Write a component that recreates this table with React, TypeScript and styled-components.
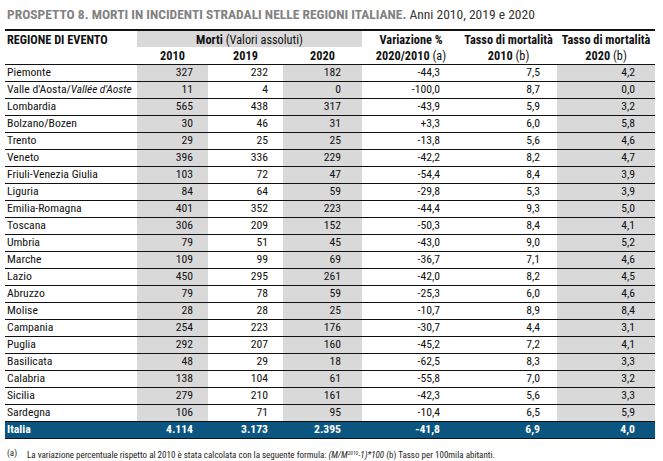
import React from "react";
import styled, { createGlobalStyle } from "styled-components";

const GlobalStyle = createGlobalStyle`
  html, body { margin: 0; padding: 0; background: #fff; }
  body {
    font-family: Roboto, "Liberation Sans", Arial, sans-serif;
    font-stretch: 77%;
    color: #111;
  }
`;

const Page = styled.div`
  width: 650px;
  padding: 0 8px 0 5px;
`;

const Title = styled.div`
  height: 29px;
  box-sizing: border-box;
  padding: 7px 0 0 2px;
  font-size: 13.5px;
  line-height: 14px;
  white-space: nowrap;
`;

const TitleStrong = styled.span`
  font-weight: bold;
  color: #828282;
`;

const TitleRest = styled.span`
  color: #333;
`;

const Table = styled.table`
  width: 650px;
  border-collapse: collapse;
  table-layout: fixed;
  font-size: 11.7px;
  border-top: 2px solid #111;
`;

const HeadRow = styled.tr<{ $h: number; $line?: boolean }>`
  height: ${(p) => p.$h}px;
  border-bottom: ${(p) => (p.$line ? "1px solid #111" : "none")};
`;

const HeadCell = styled.th<{ $grey?: boolean; $align?: string }>`
  padding: 2px 2px 0;
  font-size: 12.3px;
  font-weight: bold;
  text-align: ${(p) => p.$align || "center"};
  vertical-align: middle;
  background: ${(p) => (p.$grey ? "#d9d9d9" : "transparent")};
  line-height: 13px;
  white-space: nowrap;
`;

const Light = styled.span`
  font-weight: normal;
`;

const Row = styled.tr`
  height: 17px;
  border-bottom: 1px solid #111;
`;

const TotalRow = styled.tr`
  height: 17px;
  background: #0b5680;
  color: #fff;
  font-weight: bold;
  border-bottom: 1px solid #111;
`;

const NameCell = styled.td`
  padding: 0 0 0 2px;
  text-align: left;
  white-space: nowrap;
  line-height: 13px;
`;

const NameItalic = styled.i`
  font-size: 11.3px;
`;

const NumCell = styled.td<{ $grey?: boolean; $pad: number }>`
  padding: 0 ${(p) => p.$pad}px 0 0;
  text-align: right;
  line-height: 13px;
  background: ${(p) => (p.$grey ? "#d9d9d9" : "transparent")};
`;

const TotalCell = styled.td<{ $pad?: number }>`
  padding: 0 ${(p) => p.$pad ?? 0}px 0 ${(p) => (p.$pad === undefined ? 2 : 0)}px;
  text-align: ${(p) => (p.$pad === undefined ? "left" : "right")};
  line-height: 13px;
`;

const Note = styled.div`
  margin-top: 8px;
  padding-left: 2px;
  font-size: 9px;
  line-height: 12px;
  color: #222;
  white-space: nowrap;
  display: flex;
`;

const NoteTag = styled.span`
  width: 20px;
`;

const Formula = styled.i``;

const Sup = styled.sup`
  font-size: 5.5px;
  vertical-align: 3px;
`;

type R = [string, string, string, string, string, string, string];

const rows: R[] = [
  ["Piemonte", "327", "232", "182", "-44,3", "7,5", "4,2"],
  ["Valle d'Aosta/", "11", "4", "0", "-100,0", "8,7", "0,0"],
  ["Lombardia", "565", "438", "317", "-43,9", "5,9", "3,2"],
  ["Bolzano/Bozen", "30", "46", "31", "+3,3", "6,0", "5,8"],
  ["Trento", "29", "25", "25", "-13,8", "5,6", "4,6"],
  ["Veneto", "396", "336", "229", "-42,2", "8,2", "4,7"],
  ["Friuli-Venezia Giulia", "103", "72", "47", "-54,4", "8,4", "3,9"],
  ["Liguria", "84", "64", "59", "-29,8", "5,3", "3,9"],
  ["Emilia-Romagna", "401", "352", "223", "-44,4", "9,3", "5,0"],
  ["Toscana", "306", "209", "152", "-50,3", "8,4", "4,1"],
  ["Umbria", "79", "51", "45", "-43,0", "9,0", "5,2"],
  ["Marche", "109", "99", "69", "-36,7", "7,1", "4,6"],
  ["Lazio", "450", "295", "261", "-42,0", "8,2", "4,5"],
  ["Abruzzo", "79", "78", "59", "-25,3", "6,0", "4,6"],
  ["Molise", "28", "28", "25", "-10,7", "8,9", "8,4"],
  ["Campania", "254", "223", "176", "-30,7", "4,4", "3,1"],
  ["Puglia", "292", "207", "160", "-45,2", "7,2", "4,1"],
  ["Basilicata", "48", "29", "18", "-62,5", "8,3", "3,3"],
  ["Calabria", "138", "104", "61", "-55,8", "7,0", "3,2"],
  ["Sicilia", "279", "210", "161", "-42,3", "5,6", "3,3"],
  ["Sardegna", "106", "71", "95", "-10,4", "6,5", "5,9"],
];

const pads = [15, 15, 21, 20, 17, 20];
const greys = [true, false, true, false, false, true];

export default function App() {
  return (
    <>
      <GlobalStyle />
      <Page>
        <Title>
          <TitleStrong>PROSPETTO 8. MORTI IN INCIDENTI STRADALI NELLE REGIONI ITALIANE.</TitleStrong>{" "}
          <TitleRest>Anni 2010, 2019 e 2020</TitleRest>
        </Title>
        <Table>
          <colgroup>
            <col style={{ width: 132 }} />
            <col style={{ width: 71 }} />
            <col style={{ width: 75 }} />
            <col style={{ width: 79 }} />
            <col style={{ width: 98 }} />
            <col style={{ width: 97 }} />
            <col style={{ width: 98 }} />
          </colgroup>
          <thead>
            <HeadRow $h={17}>
              <HeadCell $align="left">REGIONE DI EVENTO</HeadCell>
              <HeadCell $grey colSpan={3}>
                Morti <Light>(Valori assoluti)</Light>
              </HeadCell>
              <HeadCell>Variazione %</HeadCell>
              <HeadCell>Tasso di mortalità</HeadCell>
              <HeadCell>Tasso di mortalità</HeadCell>
            </HeadRow>
            <HeadRow $h={17} $line>
              <HeadCell />
              <HeadCell>2010</HeadCell>
              <HeadCell>2019</HeadCell>
              <HeadCell>2020</HeadCell>
              <HeadCell>
                2020/2010 <Light>(a)</Light>
              </HeadCell>
              <HeadCell>
                2010 <Light>(b)</Light>
              </HeadCell>
              <HeadCell>
                2020 <Light>(b)</Light>
              </HeadCell>
            </HeadRow>
          </thead>
          <tbody>
            {rows.map((r) => (
              <Row key={r[0]}>
                <NameCell>
                  {r[0]}
                  {r[0] === "Valle d'Aosta/" && <NameItalic>Vallée d'Aoste</NameItalic>}
                </NameCell>
                {r.slice(1).map((v, i) => (
                  <NumCell key={i} $grey={greys[i]} $pad={pads[i]}>
                    {v}
                  </NumCell>
                ))}
              </Row>
            ))}
            <TotalRow>
              <TotalCell>Italia</TotalCell>
              {["4.114", "3.173", "2.395", "-41,8", "6,9", "4,0"].map((v, i) => (
                <TotalCell key={i} $pad={pads[i]}>
                  {v}
                </TotalCell>
              ))}
            </TotalRow>
          </tbody>
        </Table>
        <Note>
          <NoteTag>(a)</NoteTag>
          <span>
            La variazione percentuale rispetto al 2010 è stata calcolata con la seguente formula:{" "}
            <Formula>
              (M/M<Sup>2010</Sup>-1)*100
            </Formula>{" "}
            (b) Tasso per 100mila abitanti.
          </span>
        </Note>
      </Page>
    </>
  );
}
